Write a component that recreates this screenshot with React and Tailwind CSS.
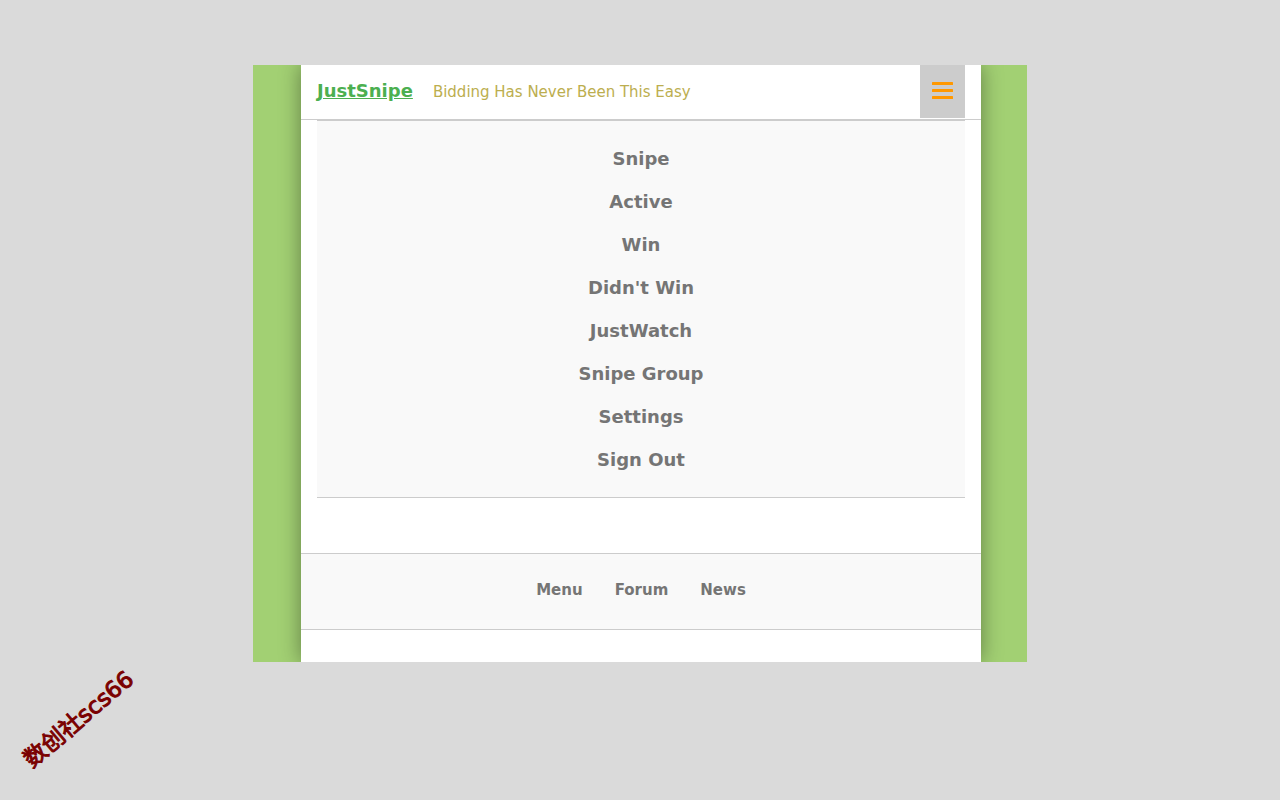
import React, { useState } from 'react';

const MENU_ITEMS = [
    'Snipe',
    'Active',
    'Win',
    "Didn't Win",
    'JustWatch',
    'Snipe Group',
    'Settings',
    'Sign Out'
];

const FOOTER_LINKS = ['Menu', 'Forum', 'News'];

function MenuIcon() {
    return (
        <svg className="w-[21px] h-[17px]" viewBox="0 0 21 17" fill="#ff9800" aria-hidden="true">
            <rect x="0" y="0" width="21" height="3" rx="0.5" />
            <rect x="0" y="7" width="21" height="3" rx="0.5" />
            <rect x="0" y="14" width="21" height="3" rx="0.5" />
        </svg>
    );
}

function Header({ onToggle, isOpen }) {
    return (
        <header className="flex items-start justify-between border-b border-[#cccccc] px-4 h-[55px]">
            <div className="flex items-baseline gap-5 pt-3">
                <a href="#home" className="text-[18px] leading-7 font-bold text-[#4caf50] underline">
                    JustSnipe
                </a>
                <span className="text-[15px] leading-7 text-[#bcae4f]">Bidding Has Never Been This Easy</span>
            </div>
            <button
                type="button"
                aria-label="Toggle menu"
                aria-expanded={isOpen}
                onClick={onToggle}
                className="flex items-center justify-center w-[45px] h-[53px] pb-[2px] bg-[#cccccc]"
            >
                <MenuIcon />
            </button>
        </header>
    );
}

function App() {
    const [isOpen, setIsOpen] = useState(true);

    return (
        <div className="relative min-h-screen bg-[#dadada] pt-[65px] font-['Verdana','DejaVu_Sans',sans-serif]">
            <div className="max-w-[774px] mx-auto pl-12 pr-[46px] bg-[#a2d073] overflow-hidden">
                <div className="bg-white pb-8 shadow-[0_0_20px_rgba(0,0,0,0.4)]">
                    <Header isOpen={isOpen} onToggle={() => setIsOpen(!isOpen)} />

                    {isOpen && (
                        <nav className="mx-4 py-4 bg-[#f9f9f9] border-y border-[#cccccc]">
                            <ul>
                                {MENU_ITEMS.map((item) => (
                                    <li key={item}>
                                        <a
                                            href="#menu"
                                            className="block text-center text-[18px] leading-[43px] font-bold text-[#757575]"
                                        >
                                            {item}
                                        </a>
                                    </li>
                                ))}
                            </ul>
                        </nav>
                    )}

                    <footer className="mt-[55px] pt-[23px] pb-[25px] flex justify-center gap-8 bg-[#f9f9f9] border-y border-[#cccccc]">
                        {FOOTER_LINKS.map((link) => (
                            <a key={link} href="#footer" className="text-[15px] leading-[27px] font-bold text-[#757575]">
                                {link}
                            </a>
                        ))}
                    </footer>
                </div>
            </div>

            {/* Watermark */}
            <div className="absolute left-[11px] top-[703px] -rotate-40 text-[23px] leading-8 whitespace-nowrap text-[#7a0000] [-webkit-text-stroke:1px_#7a0000] font-['DejaVu_Sans','Noto_Sans_CJK_SC',sans-serif]">
                数创社scs66
            </div>
        </div>
    );
}

export default App;
